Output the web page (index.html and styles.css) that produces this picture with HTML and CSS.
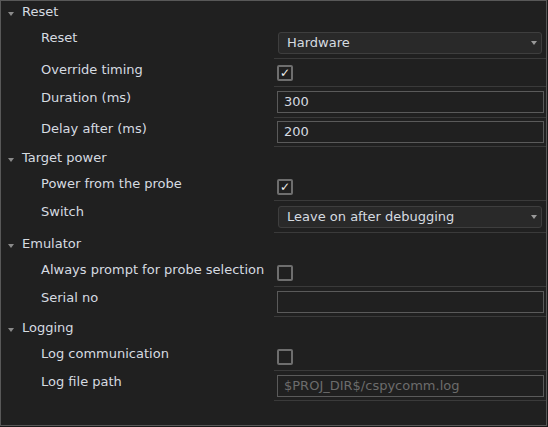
FILE: index.html
```html
<!DOCTYPE html>
<html>
<head>
  <title>Probe options</title>
  <link rel="stylesheet" href="styles.css">
</head>
<body>
  <div class="panel">
    <div class="group">Reset</div>
    <div class="row tall">
      <div class="label">Reset</div>
      <div class="value"><div class="select">Hardware<span class="arrow"></span></div></div>
    </div>
    <div class="row">
      <div class="label">Override timing</div>
      <div class="value"><span class="check on">&#10003;</span></div>
    </div>
    <div class="row mid">
      <div class="label">Duration (ms)</div>
      <div class="value"><div class="field">300</div></div>
    </div>
    <div class="row short">
      <div class="label">Delay after (ms)</div>
      <div class="value"><div class="field">200</div></div>
    </div>

    <div class="group">Target power</div>
    <div class="row">
      <div class="label">Power from the probe</div>
      <div class="value"><span class="check on">&#10003;</span></div>
    </div>
    <div class="row tall">
      <div class="label">Switch</div>
      <div class="value"><div class="select">Leave on after debugging<span class="arrow"></span></div></div>
    </div>

    <div class="group">Emulator</div>
    <div class="row">
      <div class="label">Always prompt for probe selection</div>
      <div class="value"><span class="check"></span></div>
    </div>
    <div class="row mid2">
      <div class="label">Serial no</div>
      <div class="value"><div class="field"></div></div>
    </div>

    <div class="group">Logging</div>
    <div class="row">
      <div class="label">Log communication</div>
      <div class="value"><span class="check"></span></div>
    </div>
    <div class="row mid2">
      <div class="label">Log file path</div>
      <div class="value"><div class="field hint">$PROJ_DIR$/cspycomm.log</div></div>
    </div>
  </div>
</body>
</html>
```

FILE: styles.css
```css
body {
  margin: 0;
  background-color: #1a1a1a;
  font-family: "DejaVu Sans", Verdana, sans-serif;
  font-size: 13px;
  color: #d6dbe0;
}
.panel {
  width: 545px;
  height: 424px;
  border: 1px solid #585858;
  background-color: #202020;
}
.group {
  height: 26px;
  line-height: 22px;
  padding-left: 21px;
  position: relative;
}
.group::before {
  content: "";
  position: absolute;
  left: 7px;
  top: 11px;
  border-left: 3.5px solid transparent;
  border-right: 3.5px solid transparent;
  border-top: 4px solid #8a8a8a;
}
.row {
  display: grid;
  grid-template-columns: 273px 1fr;
  height: 28px;
}
.row.tall { height: 32px; }
.row.mid { height: 31px; }
.row.mid2 { height: 30px; }
.row.short { height: 29px; }
.label {
  padding-left: 40px;
  line-height: 21px;
  white-space: nowrap;
}
.value {
  display: flex;
  align-items: center;
  padding: 0 2px 0 3px;
  border-bottom: 1px solid #3a3a3a;
}
.check {
  width: 12px;
  height: 12px;
  border: 2px solid #6e6e6e;
  border-radius: 2px;
  font-size: 12px;
  font-weight: bold;
  line-height: 12px;
  text-align: center;
  color: #f0f0f0;
}
.field {
  flex: 1;
  height: 20px;
  border: 1px solid #5a5a5a;
  line-height: 20px;
  padding-left: 6px;
}
.field.hint {
  color: #6c6c6c;
}
.select {
  flex: 1;
  height: 20px;
  margin: 0 2px 0 1px;
  border: 1px solid #3e3e3e;
  border-radius: 3px;
  background-color: #292929;
  line-height: 20px;
  padding-left: 8px;
  position: relative;
}
.arrow {
  position: absolute;
  right: 4px;
  top: 8px;
  border-left: 3.5px solid transparent;
  border-right: 3.5px solid transparent;
  border-top: 4px solid #9a9a9a;
}
```
